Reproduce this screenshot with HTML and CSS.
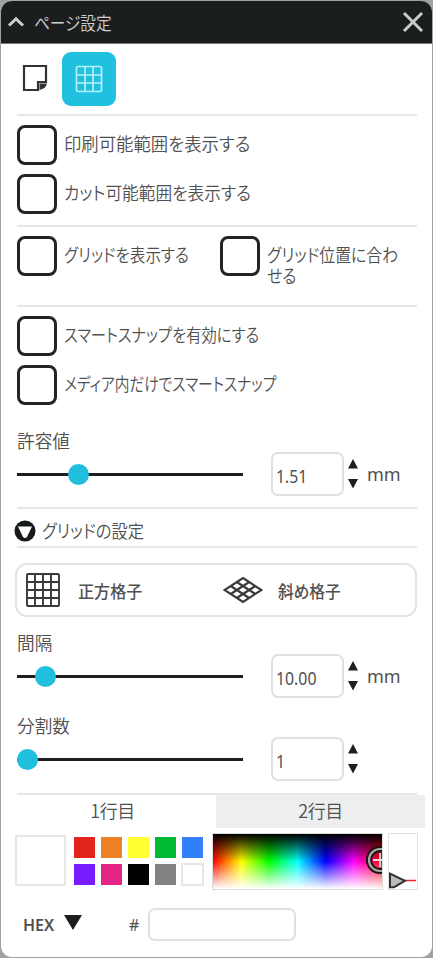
FILE: index.html
```html
<!DOCTYPE html>
<html lang="ja">
<head>
<meta charset="utf-8">
<title>ページ設定</title>
<link rel="stylesheet" href="styles.css">
</head>
<body>
<main class="panel">
  <header class="header">
    <svg class="chevron" width="18" height="12" viewBox="0 0 18 12"><path d="M2 9.5 9 2.8l7 6.7"/></svg>
    <h1><span class="t t-title">ページ設定</span></h1>
    <svg class="close" width="22" height="22" viewBox="0 0 22 22"><path d="m2 2 18 18M20 2 2 20"/></svg>
  </header>

  <nav class="tools">
    <svg class="page-icon" width="26" height="28" viewBox="0 0 26 28"><path d="M2 2h22v16h-8v8H2z" /><path class="fold" d="M17.500 26v-6.500H25q-1 5-7.500 6.500z"/></svg>
    <span class="tool-active">
      <svg width="28" height="28" viewBox="0 0 28 28"><rect x="1.5" y="1.5" width="25" height="25" rx="1.5"/><path d="M10 1.5v25M18 1.5v25M1.5 10h25M1.5 18h25"/></svg>
    </span>
  </nav>

  <section class="group range">
    <label class="check"><i class="box"></i><span class="t t-print">印刷可能範囲を表示する</span></label>
    <label class="check"><i class="box"></i><span class="t t-cut">カット可能範囲を表示する</span></label>
  </section>

  <section class="group grid-checks">
    <label class="check"><i class="box"></i><span class="t t-grid">グリッドを表示する</span></label>
    <label class="check wrapped"><i class="box"></i><span class="t t-pos">グリッド位置に合わ<br>せる</span></label>
  </section>

  <section class="group snap">
    <label class="check"><i class="box"></i><span class="t t-smart">スマートスナップを有効にする</span></label>
    <label class="check"><i class="box"></i><span class="t t-media">メディア内だけでスマートスナップ</span></label>
    <div class="setting">
      <div class="range-col"><span class="t t-label">許容値</span><div class="slider tolerance"><i></i></div></div>
      <div class="number"><span>1.51</span></div>
      <svg class="steps" width="12" height="30" viewBox="0 0 12 30"><path d="M6 0 11 9.5H1zM1 20h10L6 29.5z"/></svg>
      <span class="unit">mm</span>
    </div>
  </section>

  <h2 class="section-head">
    <svg width="22" height="22" viewBox="0 0 22 22"><circle cx="11" cy="11" r="10.5"/><path d="M4 6.5h14L13 17q-2 2-4 0z"/></svg>
    <span class="t t-head">グリッドの設定</span>
  </h2>

  <div class="grid-types">
    <div class="type">
      <svg width="34" height="34" viewBox="0 0 34 34"><rect x="1" y="1" width="32" height="32" rx="1"/><path d="M9 1v32M17 1v32M25 1v32M1 9h32M1 17h32M1 25h32"/></svg>
      <span class="t t-square">正方格子</span>
    </div>
    <div class="type diagonal">
      <svg width="40" height="26" viewBox="0 0 40 26"><path d="M20 1 38.500 13 20 25 1.500 13zM13.800 5l18.500 12M7.700 9l18.500 12M26.200 5 7.700 17M32.300 9 13.800 21"/></svg>
      <span class="t t-diag">斜め格子</span>
    </div>
  </div>

  <div class="setting spacing">
    <div class="range-col"><span class="t t-label">間隔</span><div class="slider interval"><i></i></div></div>
    <div class="number"><span>10.00</span></div>
    <svg class="steps" width="12" height="30" viewBox="0 0 12 30"><path d="M6 0 11 9.500H1zM1 20h10L6 29.500z"/></svg>
    <span class="unit">mm</span>
  </div>
  <div class="setting division">
    <div class="range-col"><span class="t t-label">分割数</span><div class="slider divisions"><i></i></div></div>
    <div class="number"><span>1</span></div>
    <svg class="steps" width="12" height="30" viewBox="0 0 12 30"><path d="M6 0 11 9.500H1zM1 20h10L6 29.500z"/></svg>
  </div>

  <div class="tabs"><span class="tab">1行目</span><span class="tab off">2行目</span></div>

  <div class="colors">
    <i class="current"></i>
    <div class="swatches">
      <i class="red"></i><i class="orange"></i><i class="yellow"></i><i class="green"></i><i class="blue"></i>
      <i class="purple"></i><i class="pink"></i><i class="black"></i><i class="gray"></i><i class="white"></i>
    </div>
    <div class="spectrum">
      <svg width="30" height="30" viewBox="0 0 30 30"><circle class="ring-out" cx="15" cy="15" r="11"/><circle class="ring-in" cx="15" cy="15" r="11"/><path d="M15 8v14M8 15h14"/></svg>
    </div>
    <div class="value">
      <svg width="27" height="18" viewBox="0 0 27 18"><path class="line" d="M15 9.500h12"/><path class="pointer" d="M1 2.500v13.700h4L16 9.800z"/></svg>
    </div>
  </div>

  <div class="hex">
    <span class="hex-name">HEX</span>
    <svg width="20" height="17" viewBox="0 0 20 17"><path d="M1 1h18l-9 15z"/></svg>
    <span class="hash">#</span>
    <div class="hex-input"></div>
  </div>
</main>
</body>
</html>
```

FILE: styles.css
```css
* { box-sizing: border-box; }

body {
  margin: 0;
  background: #a2a2a2;
  color: #505050;
  font: 18px/20px "Noto Sans", "Noto Sans CJK JP", sans-serif;
}

.panel {
  width: 431px;
  height: 956px;
  margin: 1px;
  overflow: hidden;
  display: flex;
  flex-direction: column;
  background: #fff;
  border-radius: 11px;
}

h1, h2 { margin: 0; font: inherit; }
svg, i { display: block; flex: none; }
svg { fill: none; }

.t {
  display: block;
  flex: none;
  font-family: "Noto Sans CJK JP", sans-serif;
  font-weight: 350;
  font-feature-settings: "palt";
  white-space: nowrap;
  transform-origin: 0 50%;
}
.t-title { transform: scaleX(.87); }
.t-print { transform: scaleX(.965); }
.t-cut { transform: scaleX(.927); }
.t-grid { transform: scaleX(.865); }
.t-pos { transform: scaleX(.88); line-height: 21px; }
.t-smart { transform: scaleX(.848); }
.t-media { transform: scaleX(.817); }
.t-head { transform: scaleX(.905); }
.t-square { transform: scaleX(.975); }
.t-diag { transform: scaleX(.95); }
.t-label { transform: scaleX(.98); }

.header {
  height: 43px;
  flex: none;
  display: flex;
  align-items: center;
  padding: 0 8px 0 6px;
  background: #1b1e1f;
  border-bottom: 1px solid #777;
  color: #d0d0d0;
}
.header svg { stroke: #ccc; stroke-width: 3; }
.header h1 { flex: 1; padding: 0 0 0 9px; }

.tools {
  height: 72px;
  flex: none;
  display: flex;
  padding: 8px 0 0 5px;
  margin: 0 15px 0 16px;
  border-bottom: 2px solid #e7e7e7;
}
.page-icon { margin-top: 12px; stroke: #333; stroke-width: 2.200; }
.page-icon .fold { fill: #333; stroke: none; }
.tool-active {
  width: 54px;
  height: 54px;
  margin-left: 14px;
  display: grid;
  place-items: center;
  border-radius: 9px;
  background: #20c0df;
}
.tool-active svg { stroke: #b5f0fa; stroke-width: 1.700; }

.group {
  flex: none;
  margin: 0 15px 0 16px;
  border-bottom: 2px solid #e7e7e7;
}
.check { display: flex; gap: 7px; height: 40px; }
.check .t { margin-top: 8px; }
.box {
  width: 40px;
  height: 40px;
  border: 3px solid #222526;
  border-radius: 8px;
}
.range { height: 111px; padding-top: 9px; }
.range .check + .check { margin-top: 9px; }
.grid-checks {
  height: 80px;
  padding-top: 9px;
  display: grid;
  grid-template-columns: 203px 1fr;
}
.snap { height: 202px; padding-top: 9px; }
.snap .check + .check { margin-top: 9px; }

.setting { height: 68px; flex: none; display: flex; align-items: flex-end; }
.snap .setting { margin-top: 24px; }
.range-col { width: 226px; align-self: flex-start; padding-top: 1px; }
.slider {
  height: 22px;
  margin-top: 13px;
  display: flex;
  align-items: center;
  background: linear-gradient(#1d2021, #1d2021) 0 50% / 100% 3px no-repeat;
}
.slider i { width: 21px; height: 21px; border-radius: 50%; background: #20bfdd; }
.tolerance i { margin-left: 51px; }
.interval i { margin-left: 18px; }
.divisions i { margin-left: 0; }
.number {
  width: 73px;
  height: 44px;
  margin: 0 0 1px 28px;
  padding: 12px 0 0 3px;
  border: 2px solid #e0e0e0;
  border-radius: 7px;
}
.number span { display: block; transform: scaleX(.88); transform-origin: 0 50%; }
.steps { margin: 0 0 8px 3px; fill: #1c1f20; }
.unit { margin: 0 0 13px 8px; }

.section-head {
  height: 39px;
  flex: none;
  display: flex;
  align-items: center;
  gap: 6px;
  margin: 0 15px 0 13px;
  padding-top: 5px;
  background: linear-gradient(#e7e7e7, #e7e7e7) 3px 100% / 400px 2px no-repeat;
}
.section-head .t { margin-top: -2px; }
.section-head circle { fill: #171a1b; }
.section-head path { fill: #fff; }

.grid-types {
  height: 54px;
  flex: none;
  margin: 15px 15px 0 14px;
  display: flex;
  border: 2px solid #e4e4e4;
  border-radius: 12px;
  font-size: 16.500px;
}
.type { width: 198px; display: flex; align-items: center; padding-left: 9px; }
.type svg { stroke: #383b3c; stroke-width: 1.900; }
.type .t { margin: 1px 0 0 18px; font-weight: 500; }
.diagonal svg { margin-left: -1px; stroke-width: 2.100; }
.diagonal .t { margin-left: 15px; }

.spacing { margin: 14px 0 0 16px; }
.division { margin: 15px 0 0 16px; }

.tabs {
  height: 35px;
  flex: none;
  margin: 11px 7px 0 16px;
  display: flex;
  background: linear-gradient(#e7e7e7, #e7e7e7) 0 0 / 400px 2px no-repeat;
}
.tab {
  width: 191px;
  padding-top: 7px;
  text-align: center;
  font-family: "Noto Sans CJK JP", sans-serif;
  font-weight: 350;
  letter-spacing: -.5px;
}
.tab.off { width: 209px; margin: 2px 0 0 8px; padding-top: 5px; background: #eee; }

.colors { height: 57px; flex: none; display: flex; margin: 5px 0 0 14px; }
.current { width: 51px; height: 51px; margin-top: 2px; border: 2px solid #e6e6e6; }
.swatches {
  display: grid;
  grid-template-columns: repeat(5, 21px);
  grid-template-rows: repeat(2, 21px);
  gap: 6px;
  margin: 4px 0 0 8px;
}
.red { background: #e2251c; }
.orange { background: #ec8223; }
.yellow { background: #ffff32; }
.green { background: #00b935; }
.blue { background: #3180fa; }
.purple { background: #761cff; }
.pink { background: #e52583; }
.black { background: #000; }
.gray { background: #828282; }
.white { margin: -1px; border: 2px solid #e6e6e6; }
.spectrum {
  width: 171px;
  height: 57px;
  margin-left: 9px;
  overflow: hidden;
  display: flex;
  justify-content: flex-end;
  align-items: center;
  border: 1px solid #ddd;
  background:
    linear-gradient(#000, transparent 50%, #fff),
    linear-gradient(90deg, #f00, #ff0 16.700%, #0f0 33.300%, #0ff 50%, #00f 66.700%, #f0f 83.300%, #f00);
}
.spectrum svg { margin: -3px -13px 0 0; }
.ring-out { stroke: #151515; stroke-width: 6; }
.ring-in { stroke: #aaa; stroke-width: 2.200; }
.spectrum path { stroke: #ddd; stroke-width: 1.800; }
.value {
  width: 30px;
  height: 57px;
  margin-left: 5px;
  display: flex;
  align-items: flex-end;
  border: 1px solid #e2e2e2;
}
.pointer { fill: #bbb; stroke: #333; stroke-width: 2; }
.line { stroke: #f22; stroke-width: 1.500; }

.hex { height: 33px; flex: none; display: flex; align-items: center; margin: 18px 0 0 22px; font-size: 16px; }
.hex-name { width: 32px; font-weight: 600; }
.hex svg { margin: -4px 0 0 8px; fill: #1b1e1f; }
.hash { width: 11px; margin-left: 46px; }
.hex-input { width: 148px; height: 33px; margin-left: 8px; border: 2px solid #e0e0e0; border-radius: 7px; }
```
